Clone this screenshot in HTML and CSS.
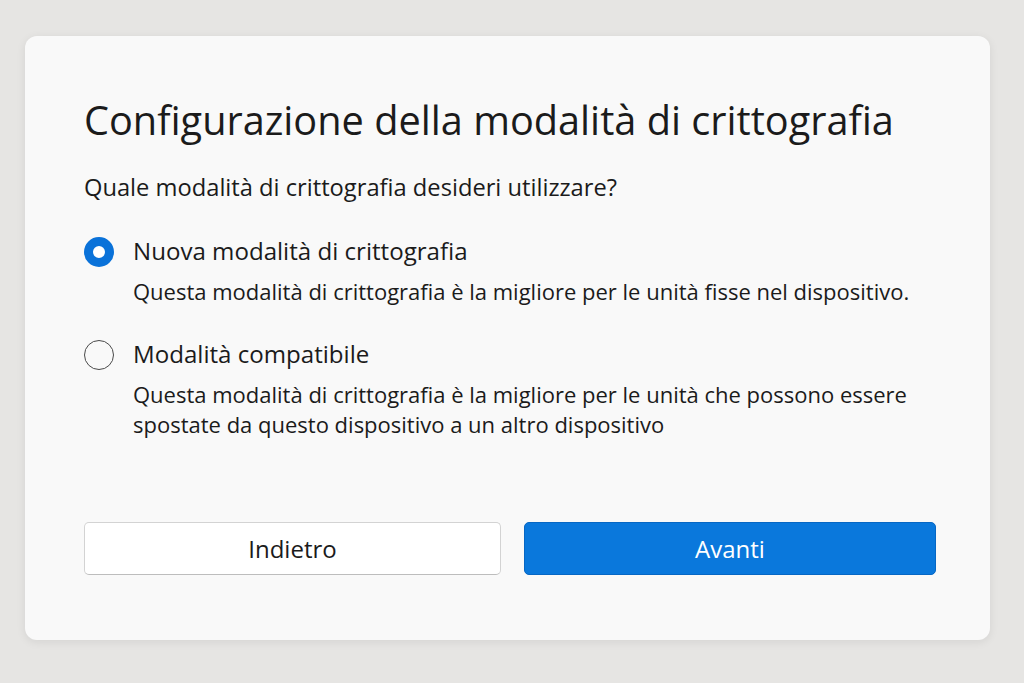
FILE: index.html
```html
<!DOCTYPE html>
<html lang="it">
<head>
<meta charset="utf-8">
<link rel="stylesheet" href="styles.css">
</head>
<body>
<div class="dialog">
  <h1 class="title">Configurazione della modalità di crittografia</h1>
  <p class="question">Quale modalità di crittografia desideri utilizzare?</p>
  <div class="options">
    <div class="option">
      <div class="option-head">
        <span class="radio checked"></span>
        <div class="label">Nuova modalità di crittografia</div>
      </div>
      <div class="desc">Questa modalità di crittografia è la migliore per le unità fisse nel dispositivo.</div>
    </div>
    <div class="option">
      <div class="option-head">
        <span class="radio"></span>
        <div class="label">Modalità compatibile</div>
      </div>
      <div class="desc">Questa modalità di crittografia è la migliore per le unità che possono essere spostate da questo dispositivo a un altro dispositivo</div>
    </div>
  </div>
  <div class="buttons">
    <button class="btn secondary">Indietro</button>
    <button class="btn primary">Avanti</button>
  </div>
</div>
</body>
</html>
```
FILE: styles.css
```css
html, body {
  margin: 0;
  padding: 0;
}
body {
  background: #e6e5e3;
  font-family: "Open Sans", "Noto Sans", sans-serif;
  color: #1b1b1b;
  width: 1024px;
  height: 683px;
  padding: 36px 34px 0 25px;
  box-sizing: border-box;
}
.dialog {
  background: #f9f9f9;
  border-radius: 12px;
  height: 604px;
  box-sizing: border-box;
  padding: 60px 54px 0 59px;
  box-shadow: 0 2px 10px rgba(0,0,0,0.08);
  display: flex;
  flex-direction: column;
}
.title {
  margin: 0;
  font-size: 39.7px;
  font-weight: 400;
  line-height: 48px;
  white-space: nowrap;
}
.question {
  margin: 28px 0 0;
  font-size: 23.7px;
  line-height: 30px;
}
.options {
  display: flex;
  flex-direction: column;
  gap: 32px;
  margin-top: 33px;
}
.option-head {
  display: flex;
  align-items: center;
  gap: 19px;
}
.radio {
  width: 30px;
  height: 30px;
  border-radius: 50%;
  box-sizing: border-box;
  border: 1.5px solid #4a4a4a;
  flex: none;
  margin-top: 1px;
}
.radio.checked {
  border: 9px solid #0a72d9;
  background: #fff;
}
.label {
  font-size: 24.1px;
  line-height: 32px;
}
.desc {
  font-size: 22px;
  line-height: 30px;
  margin: 9px 0 0 49px;
  max-width: 800px;
}
.buttons {
  display: flex;
  gap: 23px;
  margin-top: auto;
  margin-bottom: 65px;
}
.btn {
  height: 53px;
  border-radius: 5px;
  font-family: inherit;
  font-size: 24px;
  cursor: pointer;
  padding: 0;
}
.secondary {
  width: 417px;
  background: #ffffff;
  border: 1px solid #d3d3d3;
  border-bottom-color: #bdbdbd;
  color: #1b1b1b;
}
.primary {
  width: 412px;
  background: #0a78dc;
  border: 1px solid #0767c4;
  color: #ffffff;
}
```
